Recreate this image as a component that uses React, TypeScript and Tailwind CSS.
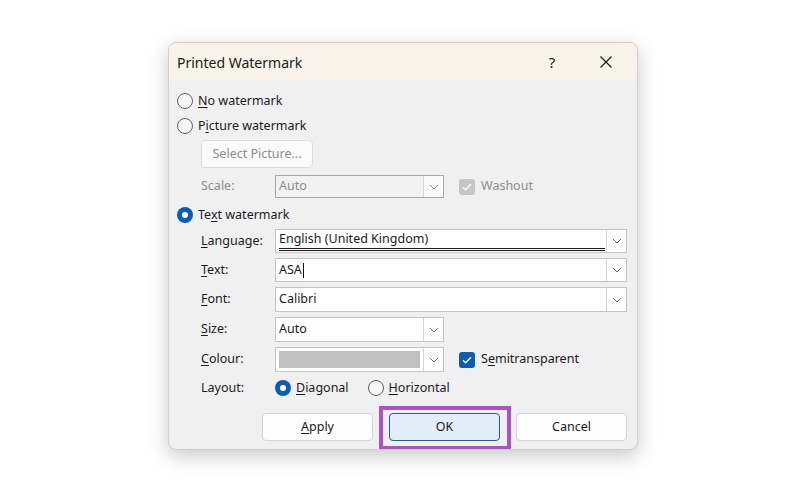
import React from "react";

const font = { fontFamily: '"Noto Sans", "Open Sans", sans-serif' };

function U({ children }: { children: React.ReactNode }) {
  return <span className="underline underline-offset-[2px] decoration-[1px]">{children}</span>;
}

function Radio({ checked }: { checked?: boolean }) {
  if (checked) {
    return (
      <span className="w-[16px] h-[16px] rounded-full bg-[#0a5db3] flex items-center justify-center shrink-0">
        <span className="w-[6px] h-[6px] rounded-full bg-white" />
      </span>
    );
  }
  return <span className="block w-[16px] h-[16px] rounded-full border border-[#5f5f5f] bg-[#f7f7f7] shrink-0" />;
}

function Chevron({ color = "#6b6b6b" }: { color?: string }) {
  return (
    <svg width="10" height="6" viewBox="0 0 10 6" fill="none">
      <path d="M1 1l4 4 4-4" stroke={color} strokeWidth="1" />
    </svg>
  );
}

function Check() {
  return (
    <svg width="10" height="8" viewBox="0 0 10 8" fill="none">
      <path d="M1 4.2l2.6 2.6L9 1.2" stroke="white" strokeWidth="1.3" />
    </svg>
  );
}

function DropBtn({ disabled }: { disabled?: boolean }) {
  return (
    <div className={`w-[20px] h-full border-l border-[#d6d6d6] flex items-center justify-center ${disabled ? "bg-[#fafafa]" : "bg-white"}`}>
      <Chevron color={disabled ? "#8a8a8a" : "#6b6b6b"} />
    </div>
  );
}

function Label({ children }: { children: React.ReactNode }) {
  return <div className="w-[74px] shrink-0 text-[#1b1b1b]">{children}</div>;
}

export default function App() {
  return (
    <div className="w-[800px] h-[497px] bg-white pt-[42px] pl-[168px] text-[12.5px]" style={font}>
      <div className="w-[470px] h-[408px] rounded-[8px] border border-[#cfcfcf] bg-[#f0f0f0] shadow-[0_6px_20px_rgba(0,0,0,0.22)] overflow-hidden flex flex-col">
        {/* Title bar */}
        <div className="h-[38px] bg-[#f9f2ea] flex items-center shrink-0">
          <div className="pl-[8px] text-[14px] text-[#1a1a1a] flex-1">Printed Watermark</div>
          <div className="text-[15px] text-[#1a1a1a] w-[20px] text-center mr-[37px]">?</div>
          <div className="mr-[24px] flex items-center">
            <svg width="14" height="14" viewBox="0 0 14 14" fill="none">
              <path d="M1.5 1.5l11 11M12.5 1.5l-11 11" stroke="#1a1a1a" strokeWidth="1.2" />
            </svg>
          </div>
        </div>

        {/* Body */}
        <div className="flex flex-col pl-[8px] pr-[10px] text-[#1b1b1b]">
          <div className="mt-[10px] h-[20px] flex items-center gap-[5px]">
            <Radio />
            <span><U>N</U>o watermark</span>
          </div>
          <div className="mt-[5px] h-[20px] flex items-center gap-[5px]">
            <Radio />
            <span>P<U>i</U>cture watermark</span>
          </div>
          <div className="mt-[4px] ml-[24px] w-[112px] h-[28px] rounded-[4px] border border-[#dcdcdc] bg-[#fbfbfb] flex items-center justify-center text-[#8c8c8c]">
            Select Picture...
          </div>
          <div className="mt-[7px] ml-[24px] h-[23px] flex items-center">
            <div className="w-[74px] shrink-0 text-[#8c8c8c]">Scale:</div>
            <div className="w-[169px] h-full border border-[#a8a8a8] bg-[#f2f2f2] flex">
              <div className="flex-1 flex items-center pl-[3px] text-[#8c8c8c]">Auto</div>
              <DropBtn disabled />
            </div>
            <div className="ml-[15px] w-[16px] h-[16px] rounded-[3px] bg-[#c6c6c6] flex items-center justify-center">
              <Check />
            </div>
            <span className="ml-[6px] text-[#8c8c8c]">Washout</span>
          </div>
          <div className="mt-[7px] h-[20px] flex items-center gap-[5px]">
            <Radio checked />
            <span>Te<U>x</U>t watermark</span>
          </div>

          <div className="mt-[4px] ml-[24px] h-[24px] flex items-center">
            <Label><U>L</U>anguage:</Label>
            <div className="flex-1 h-full border border-[#c4c4c4] bg-white flex">
              <div className="flex-1 flex flex-col pl-[3px] pr-[1px] pt-[1px]">
                <span className="leading-[16px]">English (United Kingdom)</span>
                <div className="mt-[1px] h-[1px] bg-[#1a1a1a]" />
                <div className="mt-[1px] h-[1px] bg-[#1a1a1a]" />
              </div>
              <DropBtn />
            </div>
          </div>
          <div className="mt-[5px] ml-[24px] h-[24px] flex items-center">
            <Label><U>T</U>ext:</Label>
            <div className="flex-1 h-full border border-[#c4c4c4] bg-white flex">
              <div className="flex-1 flex items-center pl-[3px]">
                ASA<span className="ml-[1px] w-[1px] h-[15px] bg-[#111]" />
              </div>
              <DropBtn />
            </div>
          </div>
          <div className="mt-[5px] ml-[24px] h-[25px] flex items-center">
            <Label><U>F</U>ont:</Label>
            <div className="flex-1 h-full border border-[#c4c4c4] bg-white flex">
              <div className="flex-1 flex items-center pl-[3px]">Calibri</div>
              <DropBtn />
            </div>
          </div>
          <div className="mt-[5px] ml-[24px] h-[25px] flex items-center">
            <Label><U>S</U>ize:</Label>
            <div className="w-[169px] h-full border border-[#c4c4c4] bg-white flex">
              <div className="flex-1 flex items-center pl-[3px]">Auto</div>
              <DropBtn />
            </div>
          </div>
          <div className="mt-[5px] ml-[24px] h-[25px] flex items-center">
            <Label><U>C</U>olour:</Label>
            <div className="w-[169px] h-full border border-[#c4c4c4] bg-white flex">
              <div className="flex-1 flex items-center pl-[3px] pr-[3px]">
                <div className="w-full h-[17px] bg-[#c0c0c0]" />
              </div>
              <DropBtn />
            </div>
            <div className="ml-[15px] w-[16px] h-[16px] rounded-[3px] bg-[#0a5db3] flex items-center justify-center">
              <Check />
            </div>
            <span className="ml-[6px]">S<U>e</U>mitransparent</span>
          </div>
          <div className="mt-[6px] ml-[24px] h-[20px] flex items-center">
            <Label>Layout:</Label>
            <Radio checked />
            <span className="ml-[5px]"><U>D</U>iagonal</span>
            <span className="ml-[19px] flex items-center"><Radio /></span>
            <span className="ml-[5px]"><U>H</U>orizontal</span>
          </div>

          <div className="mt-[15px] h-[28px] flex justify-end gap-[16px] pr-[0px]">
            <div className="w-[111px] h-full rounded-[4px] border border-[#d2d2d2] bg-[#fdfdfd] flex items-center justify-center">
              <span><U>A</U>pply</span>
            </div>
            <div className="relative w-[111px] h-full">
              <div className="w-full h-full rounded-[4px] border border-[#1f5e9c] bg-[#e1edf8] flex items-center justify-center">
                OK
              </div>
              <div className="absolute -left-[10px] -top-[7px] -right-[11px] -bottom-[9px] border-[4px] border-[#ab52c4]" />
            </div>
            <div className="w-[111px] h-full rounded-[4px] border border-[#d2d2d2] bg-[#fdfdfd] flex items-center justify-center">
              Cancel
            </div>
          </div>
        </div>
      </div>
    </div>
  );
}
